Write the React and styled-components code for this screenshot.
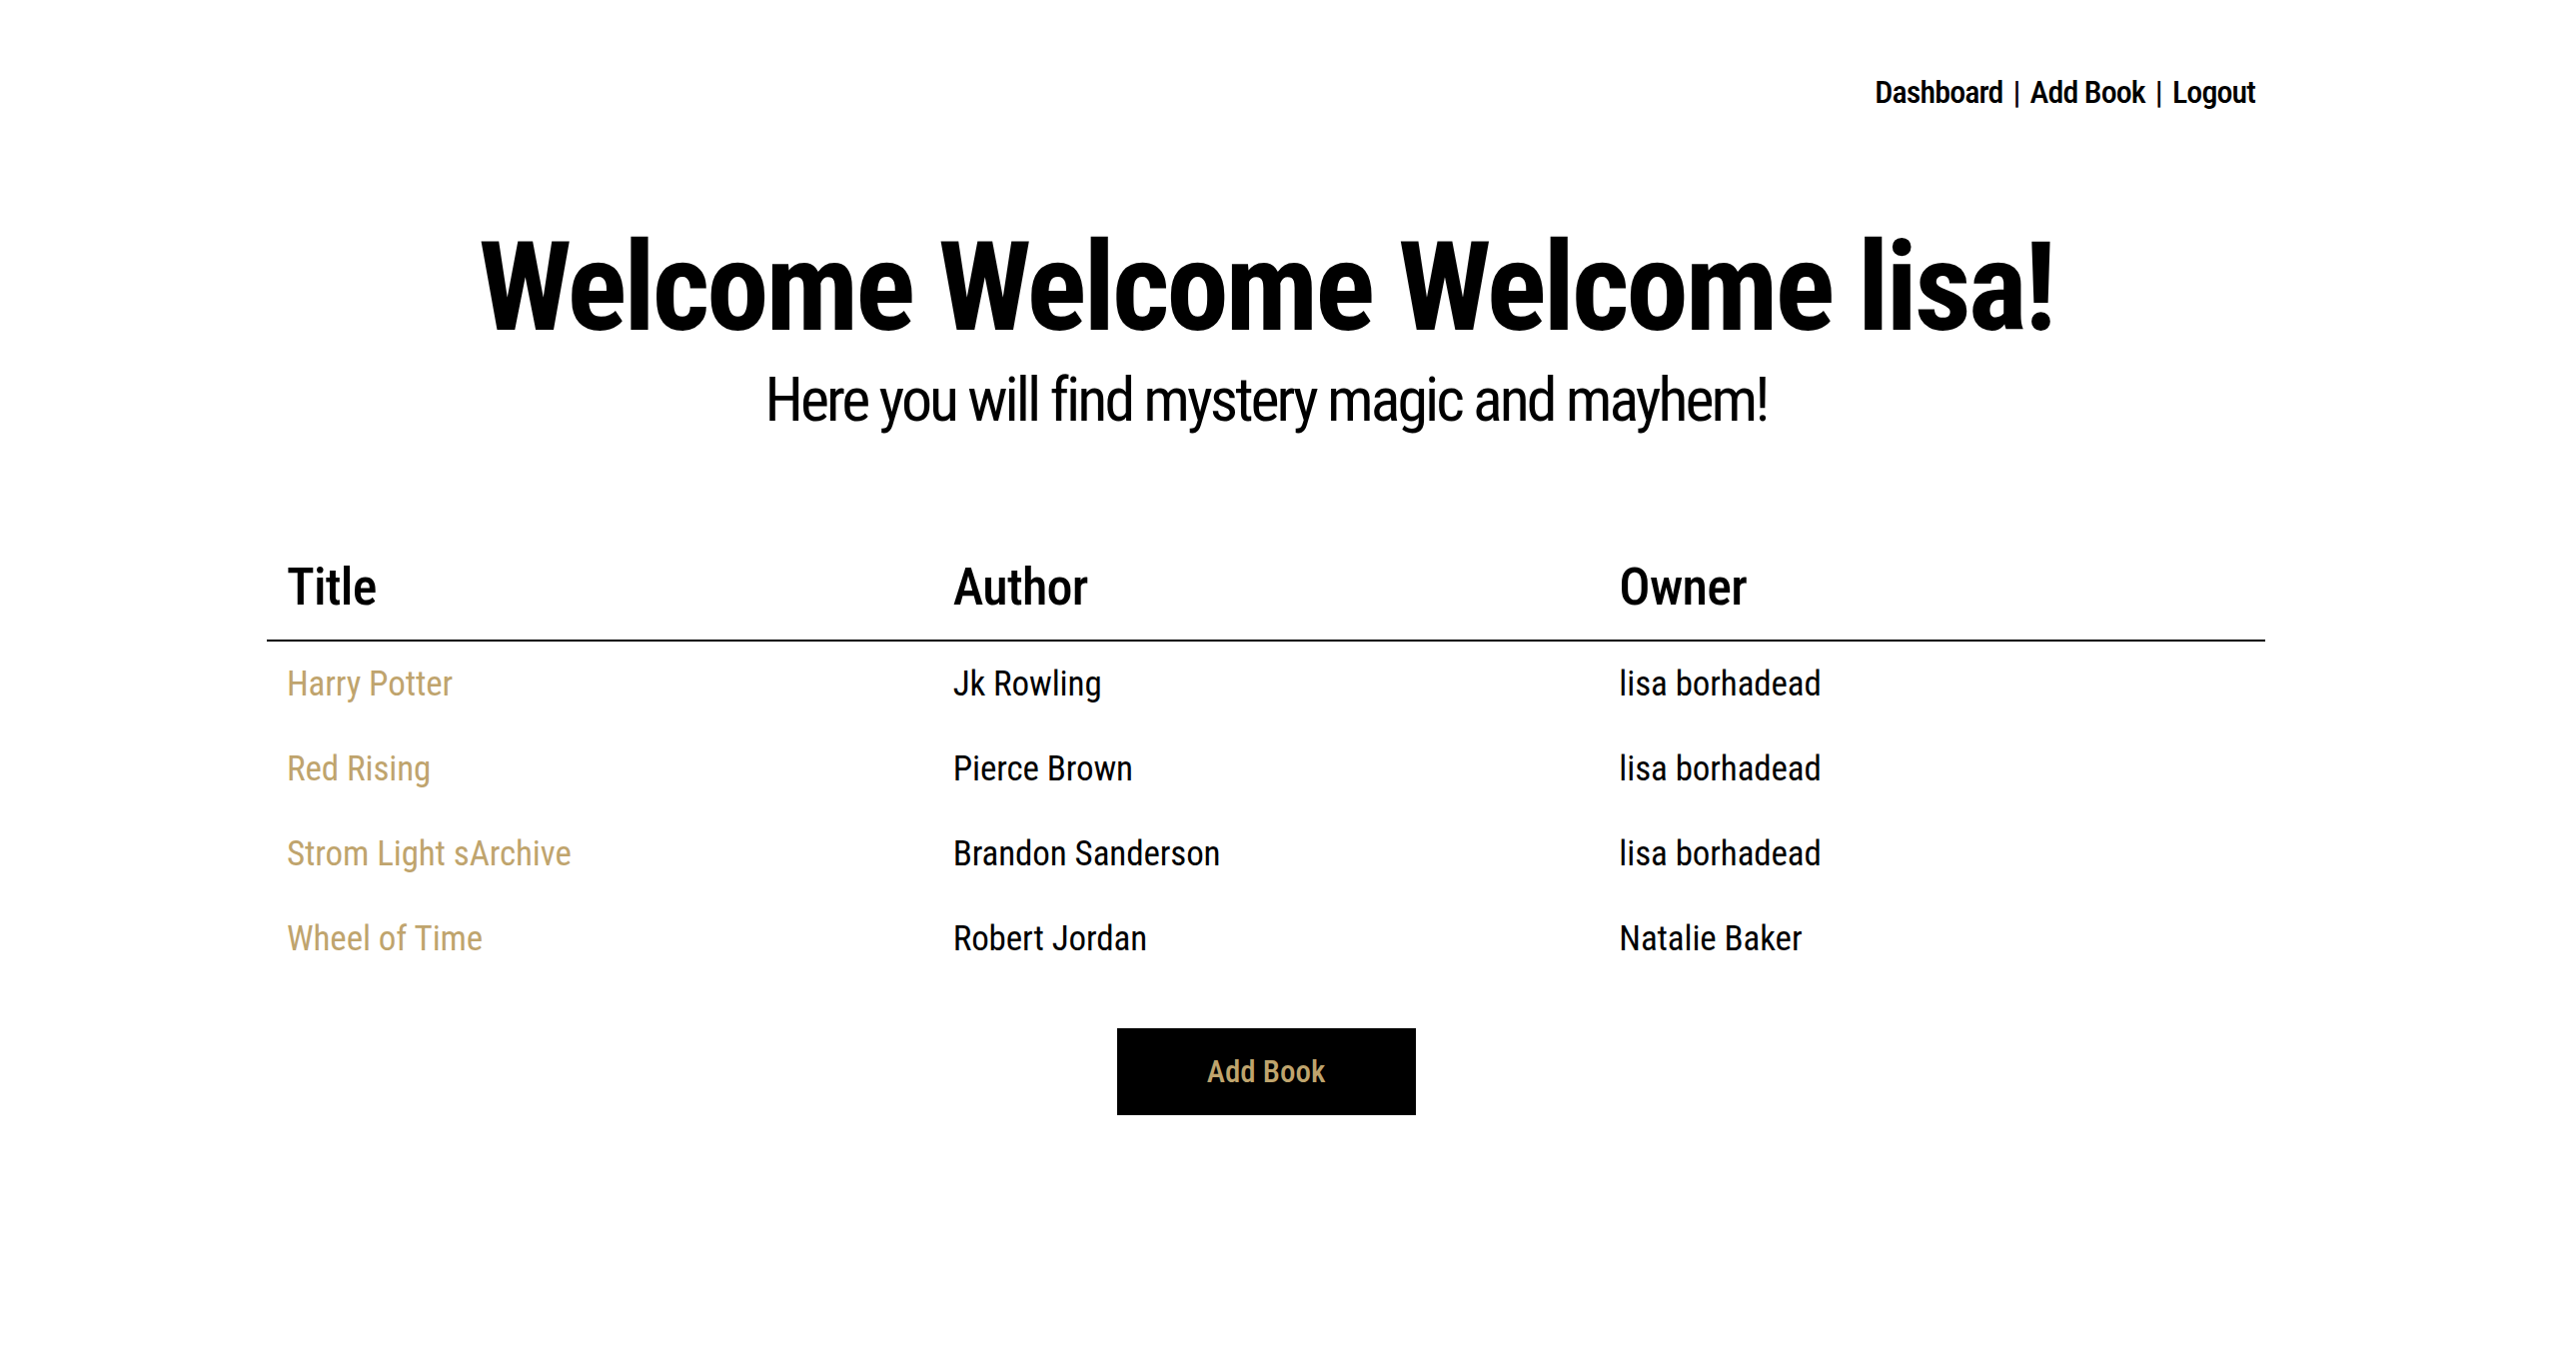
import React from "react";
import styled, { createGlobalStyle } from "styled-components";

const GlobalStyle = createGlobalStyle`
  html, body {
    margin: 0;
    padding: 0;
    background: #ffffff;
  }
  body {
    font-family: "Roboto Condensed", "Liberation Sans", sans-serif;
    color: #000000;
  }
`;

const GOLD = "#bfa46d";

const Page = styled.div`
  padding-right: 44px;
`;

const Container = styled.div`
  max-width: 2000px;
  margin: 0 auto;
`;

const Nav = styled.nav`
  display: flex;
  justify-content: flex-end;
  align-items: center;
  padding: 73px 10px 0 0;
  font-size: 32px;
  line-height: 1.2;
  font-weight: 500;
  letter-spacing: -0.9px;
`;

const NavLink = styled.a`
  color: #000;
  text-decoration: none;
`;

const Sep = styled.span`
  margin: 0 10px;
`;

const Hero = styled.header`
  text-align: center;
  margin-top: 108px;
`;

const Heading = styled.h1`
  margin: 0;
  font-size: 125px;
  line-height: 1.1;
  font-weight: 700;
  letter-spacing: -3px;
  white-space: nowrap;
`;

const Subtitle = styled.p`
  margin: 6px 0 0;
  font-size: 62px;
  line-height: 1.2;
  font-weight: 400;
  letter-spacing: -3px;
`;

const Table = styled.table`
  width: 100%;
  margin-top: 120px;
  border-collapse: collapse;
  table-layout: fixed;
`;

const Th = styled.th`
  text-align: left;
  font-weight: 500;
  font-size: 52px;
  line-height: 1.2;
  letter-spacing: -0.7px;
  padding: 0 20px 20px;
  border-bottom: 2px solid #000;
`;

const Td = styled.td`
  font-size: 35px;
  line-height: 1.2;
  font-weight: 400;
  letter-spacing: -0.1px;
  padding: 22px 20px 21px;
  color: ${(p) => (p.$gold ? GOLD : "#000")};
`;

const ButtonRow = styled.div`
  display: flex;
  justify-content: center;
  margin-top: 47px;
`;

const Button = styled.button`
  width: 299px;
  height: 87px;
  background: #000;
  color: ${GOLD};
  border: none;
  font-family: inherit;
  font-size: 31px;
  font-weight: 500;
  cursor: pointer;
`;

const books = [
  { title: "Harry Potter", author: "Jk Rowling", owner: "lisa borhadead" },
  { title: "Red Rising", author: "Pierce Brown", owner: "lisa borhadead" },
  { title: "Strom Light sArchive", author: "Brandon Sanderson", owner: "lisa borhadead" },
  { title: "Wheel of Time", author: "Robert Jordan", owner: "Natalie Baker" },
];

export default function App() {
  return (
    <Page>
      <GlobalStyle />
      <Container>
        <Nav>
          <NavLink href="#">Dashboard</NavLink>
          <Sep>|</Sep>
          <NavLink href="#">Add Book</NavLink>
          <Sep>|</Sep>
          <NavLink href="#">Logout</NavLink>
        </Nav>
        <Hero>
          <Heading>Welcome Welcome Welcome lisa!</Heading>
          <Subtitle>Here you will find mystery magic and mayhem!</Subtitle>
        </Hero>
        <Table>
          <thead>
            <tr>
              <Th>Title</Th>
              <Th>Author</Th>
              <Th>Owner</Th>
            </tr>
          </thead>
          <tbody>
            {books.map((b) => (
              <tr key={b.title}>
                <Td $gold>{b.title}</Td>
                <Td>{b.author}</Td>
                <Td>{b.owner}</Td>
              </tr>
            ))}
          </tbody>
        </Table>
        <ButtonRow>
          <Button>Add Book</Button>
        </ButtonRow>
      </Container>
    </Page>
  );
}
